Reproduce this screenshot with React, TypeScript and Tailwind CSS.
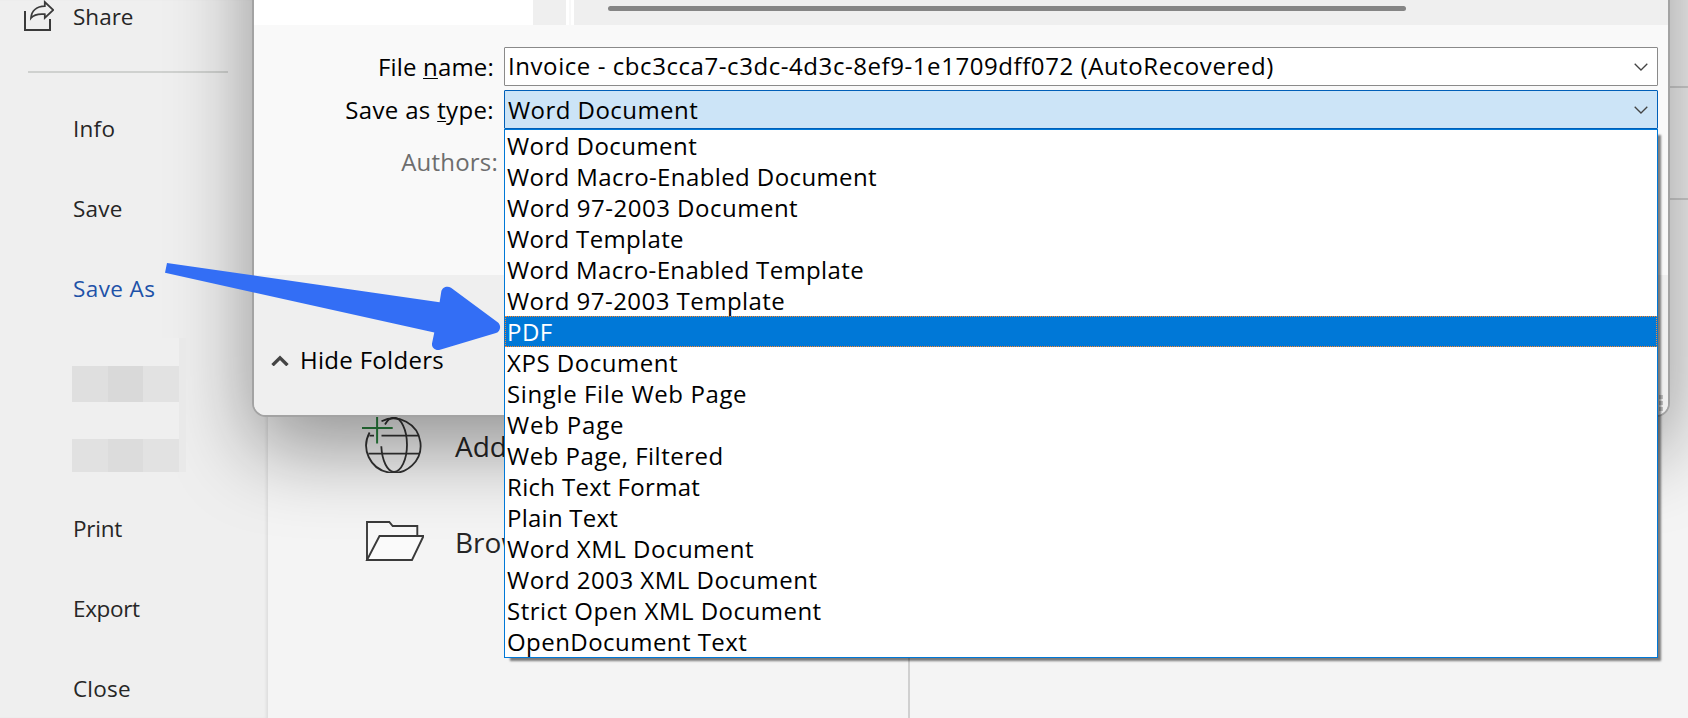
import { clsx } from 'clsx'

// ─── Backstage navigation ─────────────────────────────────────────────────────
const TOP_ITEMS = [
  { label: 'Info',    style: 'tracking-[0.25px]' },
  { label: 'Save',    style: 'tracking-[0.25px]' },
  { label: 'Save As', style: 'tracking-[0.4px] text-[#1e52a8]' },
]

const BOTTOM_ITEMS = [
  { label: 'Print',  style: 'tracking-[-0.25px]' },
  { label: 'Export', style: 'tracking-[-0.35px]' },
  { label: 'Close',  style: 'tracking-[0.2px]' },
]

// ─── File types ───────────────────────────────────────────────────────────────
const FILE_TYPES = [
  { label: 'Word Document',               tracking: 'tracking-[0.45px]' },
  { label: 'Word Macro-Enabled Document', tracking: 'tracking-[0.4px]' },
  { label: 'Word 97-2003 Document',       tracking: 'tracking-[0.5px]' },
  { label: 'Word Template',               tracking: 'tracking-[0.35px]' },
  { label: 'Word Macro-Enabled Template', tracking: 'tracking-[0.36px]' },
  { label: 'Word 97-2003 Template',       tracking: 'tracking-[0.46px]' },
  { label: 'PDF',                         tracking: 'tracking-[0.5px]' },
  { label: 'XPS Document',                tracking: 'tracking-[0.54px]' },
  { label: 'Single File Web Page',        tracking: 'tracking-[0.62px]' },
  { label: 'Web Page',                    tracking: 'tracking-[0.8px]' },
  { label: 'Web Page, Filtered',          tracking: 'tracking-[0.49px]' },
  { label: 'Rich Text Format',            tracking: 'tracking-[0.32px]' },
  { label: 'Plain Text',                  tracking: 'tracking-[0.25px]' },
  { label: 'Word XML Document',           tracking: 'tracking-[0.5px]' },
  { label: 'Word 2003 XML Document',      tracking: 'tracking-[0.49px]' },
  { label: 'Strict Open XML Document',    tracking: 'tracking-[0.49px]' },
  { label: 'OpenDocument Text',           tracking: 'tracking-[0.45px]' },
]

function ShareIcon() {
  return (
    <svg width="32" height="32" viewBox="0 0 32 32" fill="none" stroke="#3a3a3a" strokeWidth="2">
      <path d="M3 11V30h25V19" />
      <path d="M9 18C9.500 10.500 15 6.500 22.800 6.200V2L31.300 10 22.800 18v-3.800C17 13.600 12 14.500 9 18Z" strokeWidth="1.8" />
    </svg>
  )
}

function AddPlaceIcon() {
  return (
    <svg width="62" height="60" viewBox="0 0 62 60" fill="none" stroke="#333" strokeWidth="1.8">
      <path d="M19.500 8.200A27.200 27.200 0 1 1 7.600 19.500" />
      <path d="M23 11.500C25.500 7 28.500 4.600 32 4.600c7 0 13 12.200 13 27.100s-6 27.100-13 27.100c-6.500 0-12-11-12.700-25.500" />
      <path d="M19.500 22.700H57M7.500 22.700h4.500M6.500 40.700h51" />
      <path d="M15.100 2.500v28M0 15h30.700" stroke="#2b8440" strokeWidth="2" />
    </svg>
  )
}

function FolderIcon() {
  return (
    <svg width="62" height="60" viewBox="0 0 62 60" fill="#fafafa" stroke="#3a3a3a" strokeWidth="1.9">
      <path d="M5 48V10h22.300l3.400 4H55.300v34Z" stroke="none" fillOpacity=".75" />
      <path d="M55.300 24V14H30.700L27.300 10H5v38" fill="none" />
      <path d="M5 48 17.500 24H61.500L50 48Z" />
    </svg>
  )
}

function ComboArrow() {
  return (
    <svg width="14" height="8" viewBox="0 0 14 8" fill="none" stroke="#444" strokeWidth="1.3">
      <path d="M.7.7 7 7 13.300.7" />
    </svg>
  )
}

function Sidebar() {
  return (
    <aside className="flex h-full w-[268px] shrink-0 flex-col bg-[#efefef] text-[22.5px] text-[#262626] shadow-[inset_-3px_0_3px_-1px_rgba(0,0,0,0.07)]">
      <div className="flex h-8 shrink-0 items-center gap-[19px] pl-[22px]">
        <ShareIcon />
        <span className="mt-0.5">Share</span>
      </div>
      <div className="mt-[39px] ml-7 h-0.5 w-[200px] shrink-0 bg-[#cfd1cf]" />
      <nav className="flex flex-col pt-4 pl-[73px]">
        {TOP_ITEMS.map(({ label, style }) => (
          <div key={label} className={clsx('flex h-20 items-center', style)}>{label}</div>
        ))}
        {/* pixelated entries, painted over the dialog shadow */}
        <div className="relative z-10 mt-[9px] mb-[17px] -ml-[7px] flex h-[134px] w-[120px] flex-col gap-[37px] border-r-[7px] border-[#e9e9e9] bg-[#efefef] pt-7 pl-1.5">
          <div className="flex h-9 w-[107px]">
            <div className="flex-1 bg-[#dfdfdf]" />
            <div className="flex-1 bg-[#d9d9d9]" />
            <div className="flex-1 bg-[#e2e2e2]" />
          </div>
          <div className="flex h-[33px] w-[107px]">
            <div className="flex-1 bg-[#e1e1e1]" />
            <div className="flex-1 bg-[#dcdcdc]" />
            <div className="flex-1 bg-[#e2e2e2]" />
          </div>
        </div>
        {BOTTOM_ITEMS.map(({ label, style }) => (
          <div key={label} className={clsx('flex h-20 items-center', style)}>{label}</div>
        ))}
      </nav>
    </aside>
  )
}

function Places() {
  return (
    <main className="flex min-w-0 flex-1 bg-[#f4f4f4]">
      <div className="flex w-[642px] shrink-0 flex-col border-r-2 border-[#d0d0d0] pt-[398px] pl-[94px] text-[28px] text-[#262626]">
        <div className="flex h-24 items-center gap-[31px]">
          <div className="-mt-[6px]"><AddPlaceIcon /></div>
          <span>Add</span>
        </div>
        <div className="flex h-24 items-center gap-[31px]">
          <FolderIcon />
          <span>Brow</span>
        </div>
      </div>
      <div className="flex flex-1 flex-col pt-[86px]">
        <div className="h-[114px] border-y-2 border-[#d0d0d0]" />
      </div>
    </main>
  )
}

function TypeList() {
  return (
    <ul className="absolute top-[38px] -left-px z-10 w-[1154px] border border-[#0078d7] bg-white shadow-[4px_4px_2px_-1.500px_rgba(0,0,0,0.5)]">
      {FILE_TYPES.map(({ label, tracking }) => (
        <li
          key={label}
          className={clsx(
            'h-[31px] pl-0.5 leading-[31px]',
            tracking,
            label === 'PDF' && 'bg-[#0078d7] text-white outline-1 -outline-offset-1 outline-dotted outline-[#ff8728]',
          )}
        >
          {label}
        </li>
      ))}
    </ul>
  )
}

function SaveDialog() {
  return (
    <section className="absolute -top-[400px] left-[252px] flex h-[817px] w-[1418px] flex-col rounded-[14px] border-2 border-[#a3a3a3] bg-[#f9f9f9] pt-[398px] text-[24px] text-black shadow-[0_32px_82px_rgba(0,0,0,0.4)]">
      {/* bottom edge of the file pane */}
      <div className="flex h-[25px] shrink-0 bg-white">
        <div className="w-[279px]" />
        <div className="w-[33px] bg-[#efefef]" />
        <div className="mx-[3px] w-0.5 bg-[#f8f8f8]" />
        <div className="flex-1 bg-[#efefef] pt-1.5 pl-[34px]">
          <div className="h-[5px] w-[798px] rounded-full bg-[#858585]" />
        </div>
      </div>

      <div className="flex h-[250px] shrink-0 flex-col pt-[22px] pr-2.5">
        <div className="flex h-[39px]">
          <label className="w-[240px] pt-[3px] text-right leading-[34px] tracking-[0.18px]">
            File <span className="underline decoration-1 underline-offset-2">n</span>ame:
          </label>
          <div className="ml-2.5 flex flex-1 items-center justify-between rounded-[1px] border border-[#8a8a8a] bg-white pr-[9px] pl-[3px]">
            <span className="-mt-0.5 tracking-[0.57px]">Invoice - cbc3cca7-c3dc-4d3c-8ef9-1e1709dff072 (AutoRecovered)</span>
            <ComboArrow />
          </div>
        </div>
        <div className="mt-1 flex h-[39px]">
          <label className="w-[240px] pt-[3px] text-right leading-[34px] tracking-[0.35px]">
            Save as <span className="underline decoration-1 underline-offset-2">t</span>ype:
          </label>
          <div className="relative ml-2.5 flex flex-1 items-center justify-between rounded-[1px] border border-[#005fb8] bg-[#cce4f7] pr-[9px] pl-[3px]">
            <span className="tracking-[0.45px]">Word Document</span>
            <ComboArrow />
            <TypeList />
          </div>
        </div>
        <div className="mt-4 w-[244px] text-right leading-[34px] tracking-[0.2px] text-[#6d6d6d]">Authors:</div>
      </div>

      <footer className="flex flex-1 items-end justify-between rounded-b-[12px] bg-[#efefef] pl-[17px]">
        <div className="mb-[38px] flex items-center gap-[11px]">
          <svg width="18" height="12" viewBox="0 0 18 12" fill="none" stroke="#444" strokeWidth="3.300">
            <path d="M1.500 11.200 9 3.800l7.500 7.400" />
          </svg>
          <span className="leading-[34px] tracking-[0.3px]">Hide Folders</span>
        </div>
        <div className="mr-[5px] mb-1 flex flex-col gap-0.5">
          <i className="size-1 bg-[#bdbdbd]" />
          <i className="size-1 bg-[#bdbdbd]" />
          <i className="size-1 bg-[#bdbdbd]" />
        </div>
      </footer>
    </section>
  )
}

// Callout arrow pointing from "Save As" to the PDF row
function Callout() {
  return (
    <svg className="absolute top-[255px] left-[160px] z-20" width="345" height="105" viewBox="160 255 345 105" fill="#336ef5">
      <path d="M167 263 439.600 302.300 441.300 291.500C442 287.500 447 285.200 451 287.700L498 322.500C501.500 325.500 500.500 331.500 496 333L440 349.700C435.500 351 431.500 347.500 432 343.500L434.300 332.500 165 272.700Z" />
    </svg>
  )
}

export default function App() {
  return (
    <div className="relative flex h-[718px] w-[1688px] overflow-hidden font-['Open_Sans','Noto_Sans',sans-serif] whitespace-nowrap">
      <Sidebar />
      <Places />
      <SaveDialog />
      <Callout />
    </div>
  )
}
